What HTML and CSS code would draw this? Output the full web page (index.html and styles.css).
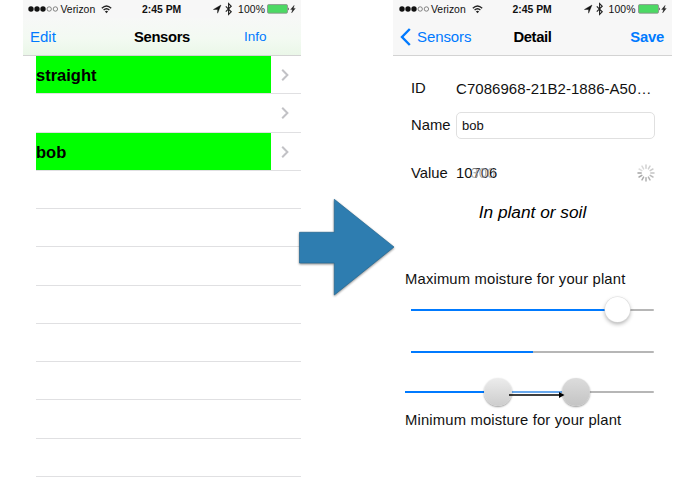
FILE: index.html
```html
<!DOCTYPE html>
<html lang="en">
<head>
<meta charset="utf-8">
<title>Sensors</title>
<link rel="stylesheet" href="styles.css">
</head>
<body>
<svg class="defs" width="0" height="0">
  <symbol id="signal" viewBox="0 0 31 8"><g fill="#111"><circle cx="3" cy="4" r="2.7"/><circle cx="9" cy="4" r="2.7"/><circle cx="15" cy="4" r="2.7"/></g><g fill="none" stroke="#555" stroke-width=".7"><circle cx="21.2" cy="4" r="2.2"/><circle cx="27.4" cy="4" r="2.2"/></g></symbol>
  <symbol id="wifi" viewBox="0 0 11 9"><g fill="none" stroke="#222" stroke-width="1.3"><path d="M.8 3.3Q5.5-1.3 10.2 3.3M2.6 5.1Q5.5 2.4 8.4 5.1"/></g><path d="M3.9 6.4Q5.5 5.1 7.1 6.4L5.5 8.2Z" fill="#222"/></symbol>
  <symbol id="power" viewBox="0 0 83 14"><path d="M8 3 4.6 11.2V7.5H.4Z" fill="#111" stroke="#111" stroke-width=".4"/><path d="m12.8 4.4 5.4 5.4-2.6 2.5V1.7l2.6 2.5-5.4 5.4" fill="none" stroke="#222" stroke-width="1.15"/></symbol>
  <symbol id="battery" viewBox="0 0 30 10"><rect x=".5" y=".6" width="20" height="8.6" rx="1.2" fill="#4cd964" stroke="#8a8a8a" stroke-width=".8"/><path d="M21.2 3.2q1.8 1.7 0 3.4z" fill="#333"/><path d="M27.2 1.3 23.6 5.5h1.9l-.9 3.5 3.7-4.6h-1.9z" fill="#222" stroke="#222" stroke-width=".3"/></symbol>
</svg>
<main class="stage">
  <section class="phone list">
    <div class="status">
      <svg class="signal"><use href="#signal"/></svg><span class="carrier">Verizon</span><svg class="wifi"><use href="#wifi"/></svg>
      <span class="time">2:45 PM</span>
      <svg class="power"><use href="#power"/></svg><span class="percent">100%</span><svg class="battery"><use href="#battery"/></svg>
    </div>
    <nav class="nav"><a class="edit">Edit</a><h1>Sensors</h1><a class="info">Info</a></nav>
    <ul class="rows">
      <li><span class="fill">straight</span><svg class="chev" viewBox="0 0 8 12"><path d="m1.2 .8 5.2 5.2-5.2 5.2"/></svg></li>
      <li><span></span><svg class="chev" viewBox="0 0 8 12"><path d="m1.2 .8 5.2 5.2-5.2 5.2"/></svg></li>
      <li><span class="fill">bob</span><svg class="chev" viewBox="0 0 8 12"><path d="m1.2 .8 5.2 5.2-5.2 5.2"/></svg></li>
      <li></li><li></li><li></li><li></li><li></li><li></li><li></li><li></li>
    </ul>
  </section>
  <section class="phone detail">
    <div class="status">
      <svg class="signal"><use href="#signal"/></svg><span class="carrier">Verizon</span><svg class="wifi"><use href="#wifi"/></svg>
      <span class="time">2:45 PM</span>
      <svg class="power"><use href="#power"/></svg><span class="percent">100%</span><svg class="battery"><use href="#battery"/></svg>
    </div>
    <nav class="nav"><a class="back"><svg viewBox="0 0 12 18"><path d="M9.8 1 2 9l7.8 8"/></svg>Sensors</a><h1>Detail</h1><a class="save">Save</a></nav>
    <div class="form">
      <div class="field id"><label>ID</label><span>C7086968-21B2-1886-A50…</span></div>
      <div class="field name"><label>Name</label><span class="input">bob</span></div>
      <div class="field value"><label>Value</label><span class="reading">10<b>70</b>6<i>300</i></span>
        <svg class="spinner" viewBox="-9 -9 18 18"><g stroke-width="1.5" stroke-linecap="round">
          <path d="M0-4.8V-8" stroke="#d0d0d0"/><path d="M0-4.8V-8" stroke="#d0d0d0" transform="rotate(30)"/><path d="M0-4.8V-8" stroke="#ccc" transform="rotate(60)"/><path d="M0-4.8V-8" stroke="#c4c4c4" transform="rotate(90)"/><path d="M0-4.8V-8" stroke="#bcbcbc" transform="rotate(120)"/><path d="M0-4.8V-8" stroke="#b4b4b4" transform="rotate(150)"/><path d="M0-4.8V-8" stroke="#b0b0b0" transform="rotate(180)"/><path d="M0-4.8V-8" stroke="#acacac" transform="rotate(210)"/><path d="M0-4.8V-8" stroke="#a8a8a8" transform="rotate(240)"/><path d="M0-4.8V-8" stroke="#a4a4a4" transform="rotate(270)"/><path d="M0-4.8V-8" stroke="#ddd" transform="rotate(300)"/><path d="M0-4.8V-8" stroke="#d8d8d8" transform="rotate(330)"/>
        </g></svg></div>
      <p class="place">In plant or soil</p>
      <p class="caption max">Maximum moisture for your plant</p>
      <div class="slider high"><b></b><i class="knob"></i></div>
      <div class="slider mid"><b></b></div>
      <div class="slider low"><b></b><b class="pale"></b><i class="knob grey from"></i><i class="knob grey to"></i>
        <svg class="drag" viewBox="0 0 56 8"><path d="M0 4h51" stroke="#000" stroke-width="1.3"/><path d="m50 1 5.5 3-5.5 3z"/></svg></div>
      <p class="caption min">Minimum moisture for your plant</p>
    </div>
  </section>
  <svg class="arrow" viewBox="0 0 104 106"><path d="M4.5 37.3H39.3V4.3L99 52 39.3 100V68H4.5Z"/></svg>
</main>
</body>
</html>
```

FILE: styles.css
```css
* { box-sizing: border-box; }
body { margin: 0; background: #fff; color: #111; font-family: "Liberation Sans", Arial, sans-serif; }
h1, p, ul { margin: 0; padding: 0; }
.defs { position: absolute; }
.stage { position: relative; width: 695px; height: 494px; overflow: hidden; display: flex; gap: 92px; padding-left: 23px; }
.phone { width: 278px; flex: none; }
.detail { width: 279px; }
.status { height: 18px; display: flex; align-items: center; padding-left: 5px; background: #f7f7f7; font-size: 10.4px; white-space: nowrap; }
.detail .status { padding-left: 5.5px; }
.status svg, .status span { flex: none; }
.signal { width: 31px; height: 8px; }
.carrier { width: 41px; padding-left: 1.5px; }
.wifi { width: 11px; height: 9px; margin-left: 1px; }
.time { font-weight: bold; width: 72px; padding-left: 30px; letter-spacing: 0; }
.power { width: 83px; height: 14px; margin-right: -58px; margin-left: 29px; }
.percent { width: 29px; letter-spacing: .1px; }
.battery { width: 30px; height: 10px; }
.nav { height: 38px; position: relative; display: grid; grid-template-columns: 1fr auto 1fr; align-items: center; border-bottom: 1px solid #d3d3d3; background: #f7f7f7; font-size: 15px; }
.list .nav { background: linear-gradient(#f7f8f7, #f3faf2 55%, #eaf7e8); }
.nav h1 { font-size: 14.8px; letter-spacing: -.35px; color: #000; }
.nav a { color: #007aff; }
.edit { padding-left: 7px; }
.info { justify-self: end; padding-right: 34.5px; font-size: 13.5px; }
.back { display: flex; align-items: center; padding-left: 7px; gap: 5px; letter-spacing: -.1px; }
.back svg { width: 12px; height: 18px; fill: none; stroke: #007aff; stroke-width: 2.4; }
.save { justify-self: end; padding-right: 8px; font-weight: bold; font-size: 14.8px; letter-spacing: -.2px; }
.rows { list-style: none; padding-left: 13px; }
.rows li { height: 38.25px; display: flex; justify-content: space-between; border-bottom: 1px solid #e0e0e2; }
.fill { width: 234.5px; background: #0f0; font-size: 16.5px; font-weight: bold; line-height: 39px; color: #000; }
.chev { width: 8px; height: 12px; margin: 13px 12.5px 0 0; fill: none; stroke: #c2c2c6; stroke-width: 2; }
.form { padding-top: 19px; }
.field { display: flex; align-items: center; height: 26px; padding-left: 18px; font-size: 14.8px; }
.field label { width: 45px; flex: none; }
.id span { font-size: 15px; letter-spacing: .05px; white-space: nowrap; }
.name { margin-top: 11px; }
.input { width: 199px; height: 27px; border: 1px solid #e0e0e0; border-radius: 5px; padding-left: 5px; font-size: 13px; line-height: 25px; }
.value { margin-top: 22px; }
.reading { position: relative; }
.reading b { font-weight: normal; color: #444; }
.reading i { position: absolute; left: 14.5px; top: 0; color: #999; font-style: normal; opacity: .75; }
.spinner { width: 18px; height: 18px; margin-left: auto; margin-right: 17.5px; }
.place { height: 26px; margin-top: 13px; text-align: center; font-size: 17.3px; font-style: italic; line-height: 26px; color: #000; }
.caption { padding-left: 12px; font-size: 14.8px; letter-spacing: .16px; line-height: 20px; white-space: nowrap; }
.max { margin-top: 44px; }
.slider { position: relative; height: 2px; margin: 0 18px; background: #b6b6b6; border-radius: 1px; }
.slider b { position: absolute; inset: 0 auto 0 0; background: #007aff; }
.high { margin-top: 20px; }
.high b { width: 200px; }
.knob { position: absolute; top: -12px; left: 194px; width: 25px; height: 25px; border-radius: 50%; background: #fff; box-shadow: 0 0 0 .5px #ddd, 0 2px 4px #0005; }
.mid { margin-top: 40px; }
.mid b { width: 122px; }
.low { margin: 38px 18px 0 12px; }
.low b { width: 85px; }
.low .pale { left: 100px; width: 65px; background: #69a9ee; }
.grey { width: 28px; height: 28px; top: -13px; background: linear-gradient(#ececec, #cdcdcd); box-shadow: 0 1px 2px #0006; }
.from { left: 79px; }
.to { left: 157px; background: linear-gradient(#dcdcdc, #c4c4c4); }
.drag { position: absolute; left: 104px; top: 0; width: 56px; height: 8px; }
.min { margin-top: 17px; }
.arrow { position: absolute; left: 295px; top: 195px; width: 104px; height: 106px; fill: #2e7db0; stroke: #246894; stroke-width: .7; filter: drop-shadow(0 1px 1px #0007); }
```
